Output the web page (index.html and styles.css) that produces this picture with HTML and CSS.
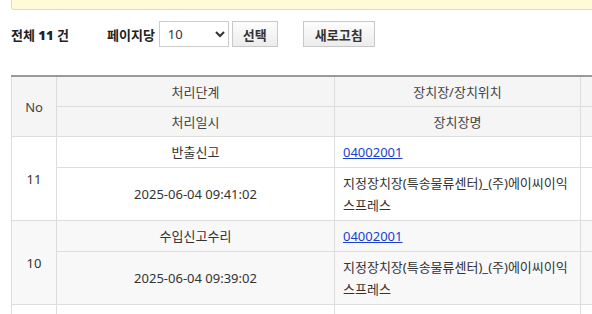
FILE: index.html
```html
<!DOCTYPE html>
<html lang="ko">
  <head>
    <meta charset="UTF-8" />
    <title>처리현황</title>
    <link rel="stylesheet" href="styles.css">
  </head>
  <body>
    <div class="wrap">
      <div class="notice"></div>

      <div class="toolbar">
        <span class="total">전체 <b>11</b> 건</span>
        <label class="per-page">페이지당</label>
        <select class="page-size">
          <option>10</option>
          <option>20</option>
          <option>50</option>
        </select>
        <button class="btn">선택</button>
        <button class="btn btn-refresh">새로고침</button>
      </div>

      <table class="grid">
        <colgroup>
          <col class="c-no" />
          <col class="c-step" />
          <col class="c-place" />
          <col class="c-etc" />
        </colgroup>
        <thead>
          <tr>
            <th rowspan="2">No</th>
            <th>처리단계</th>
            <th>장치장/장치위치</th>
            <th></th>
          </tr>
          <tr>
            <th>처리일시</th>
            <th>장치장명</th>
            <th></th>
          </tr>
        </thead>
        <tbody>
          <tr>
            <td rowspan="2">11</td>
            <td>반출신고</td>
            <td class="left"><a href="#">04002001</a></td>
            <td></td>
          </tr>
          <tr>
            <td>2025-06-04 09:41:02</td>
            <td class="left">지정장치장(특송물류센터)_(주)에이씨이익스프레스</td>
            <td></td>
          </tr>
          <tr class="alt">
            <td rowspan="2">10</td>
            <td>수입신고수리</td>
            <td class="left"><a href="#">04002001</a></td>
            <td></td>
          </tr>
          <tr class="alt">
            <td>2025-06-04 09:39:02</td>
            <td class="left">지정장치장(특송물류센터)_(주)에이씨이익스프레스</td>
            <td></td>
          </tr>
          <tr>
            <td rowspan="2">9</td>
            <td>수입신고</td>
            <td class="left"><a href="#">04002001</a></td>
            <td></td>
          </tr>
          <tr>
            <td>2025-06-04 09:30:12</td>
            <td class="left">지정장치장(특송물류센터)_(주)에이씨이익스프레스</td>
            <td></td>
          </tr>
        </tbody>
      </table>
    </div>
  </body>
</html>
```

FILE: styles.css
```css
html,
body {
  margin: 0;
  padding: 0;
  overflow: hidden;
  background: #fff;
}

body {
  font-family: "Noto Sans", "Noto Sans CJK KR", sans-serif;
  font-size: 13px;
  color: #333;
}

.wrap {
  padding: 0 0 0 11px;
  width: 740px;
}

/* notice box (mostly scrolled above the view) */
.notice {
  height: 9px;
  background: #fffbd8;
  border: 1px solid #f0dc8c;
  border-top: none;
  border-radius: 0 0 3px 3px;
}

.toolbar {
  display: flex;
  align-items: center;
  height: 26px;
  margin-top: 11px;
}

.total {
  font-weight: bold;
  color: #222;
  width: 96px;
}

.per-page {
  font-weight: bold;
  color: #222;
  margin-right: 4px;
}

.page-size {
  width: 70px;
  height: 26px;
  border: 1px solid #ccc;
  border-radius: 0;
  background: #fff;
  font-family: inherit;
  font-size: 13px;
  color: #333;
  padding: 0 4px;
  margin-right: 3px;
}

.btn {
  height: 26px;
  padding: 0 10px;
  border: 1px solid #c8c8c8;
  background: linear-gradient(#fdfdfd, #ececec);
  font-family: inherit;
  font-size: 13px;
  font-weight: bold;
  color: #333;
  border-radius: 0;
}

.btn-refresh {
  margin-left: 25px;
  padding: 0 11px;
}

.grid {
  margin-top: 28px;
  border-collapse: collapse;
  table-layout: fixed;
  width: 690px;
  border-top: 2px solid #999;
}

.c-no {
  width: 45px;
}

.c-step {
  width: 278px;
}

.c-place {
  width: 246px;
}

.grid th,
.grid td {
  border: 1px solid #ddd;
  padding: 4px 8px;
  line-height: 22px;
  text-align: center;
  font-weight: normal;
}

.grid th {
  padding-bottom: 3px;
  background: #f5f5f5;
  color: #444;
}

.grid td.left {
  text-align: left;
}

.grid tr.alt td {
  background: #f8f8f8;
}

.grid a {
  color: #1a3fcc;
  text-decoration: underline;
}
```
